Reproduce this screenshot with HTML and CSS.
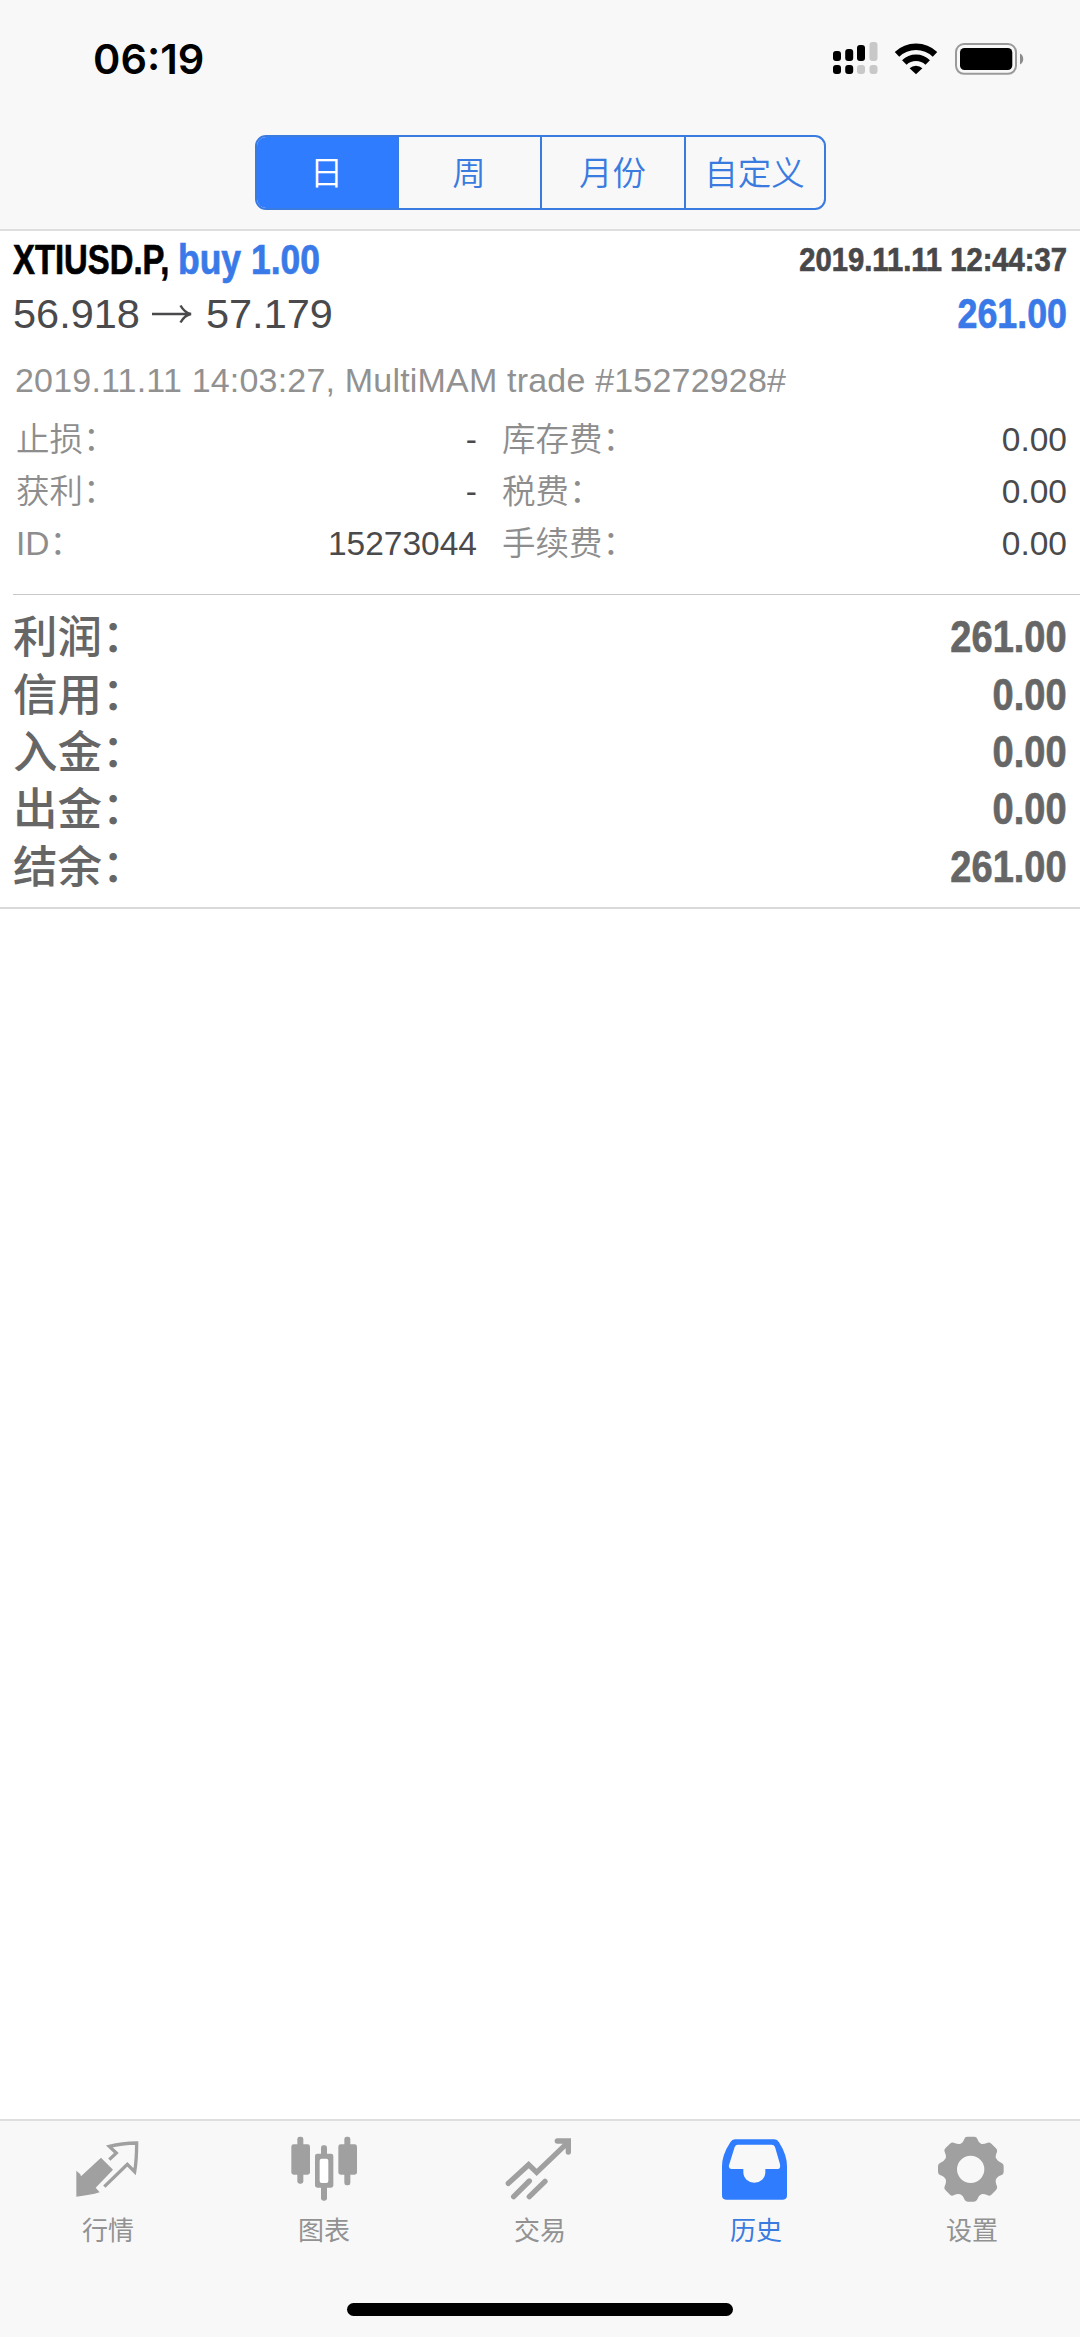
FILE: index.html
```html
<!DOCTYPE html>
<html lang="zh-CN">
<head>
<meta charset="utf-8">
<title>历史</title>
<link rel="stylesheet" href="styles.css">
</head>
<body>
<div class="app">
  <header class="top">
    <div class="status">
      <span class="clock">06:19</span>
      <svg class="status-icons" width="192" height="36" viewBox="832 40 192 36">
        <g fill="#000">
          <rect x="833" y="51" width="8" height="10" rx="3"/><rect x="845.2" y="49" width="8" height="12" rx="3"/><rect x="857" y="45" width="8" height="16" rx="3"/>
          <rect x="833" y="65" width="8" height="9" rx="3"/><rect x="845.2" y="65" width="8" height="9" rx="3"/>
        </g>
        <g fill="#c8c8c8">
          <rect x="869.5" y="42" width="8" height="19" rx="3"/><rect x="857" y="65" width="8" height="9" rx="3"/><rect x="869.5" y="65" width="8" height="9" rx="3"/>
        </g>
        <g fill="none" stroke="#000" stroke-width="6.500">
          <path d="M897 54.3a27.5 27.5 0 0 1 38 0"/><path d="M904.3 62.500a17 17 0 0 1 23.400 0"/>
        </g>
        <path d="M909.600 68.300a9 9 0 0 1 12.800 0L916 74.300z" fill="#000"/>
        <rect x="956" y="44" width="60" height="29.800" rx="8" fill="none" stroke="#9a9a9a" stroke-width="2"/>
        <rect x="960" y="48" width="52.300" height="22" rx="4.500"/>
        <path d="M1020 53.500c4.300 2 4.300 9 0 11z" fill="#8c8c8c"/>
      </svg>
    </div>
    <nav class="segments">
      <span class="segment active">日</span><span class="segment">周</span><span class="segment">月份</span><span class="segment">自定义</span>
    </nav>
  </header>

  <main>
    <section class="deal">
      <div class="row title"><span class="symbol"><b class="condensed">XTIUSD.P,</b></span><span class="side"><b class="condensed">buy 1.00</b></span><b class="condensed time">2019.11.11 12:44:37</b></div>
      <div class="row prices">
        <span>56.918</span>
        <svg class="arrow" width="42" height="24" viewBox="0 0 42 24" fill="none" stroke="#4a4a4c" stroke-width="2.500"><path d="M1 12H39M29.500 3.500C32 8 35 11 40 12C35 13 32 16 29.500 20.500"/></svg>
        <span>57.179</span>
        <b class="condensed profit">261.00</b>
      </div>
      <div class="comment">2019.11.11 14:03:27, MultiMAM trade #15272928#</div>
      <div class="details">
        <span class="label">止损<i>：</i></span><span class="value dash">-</span><span class="label second">库存费<i>：</i></span><span class="value">0.00</span>
        <span class="label">获利<i>：</i></span><span class="value dash">-</span><span class="label second">税费<i>：</i></span><span class="value">0.00</span>
        <span class="label">ID<i>：</i></span><span class="value">15273044</span><span class="label second">手续费<i>：</i></span><span class="value">0.00</span>
      </div>
    </section>
    <section class="summary">
      <div class="total"><span>利润<i>：</i></span><b class="condensed">261.00</b></div>
      <div class="total"><span>信用<i>：</i></span><b class="condensed">0.00</b></div>
      <div class="total"><span>入金<i>：</i></span><b class="condensed">0.00</b></div>
      <div class="total"><span>出金<i>：</i></span><b class="condensed">0.00</b></div>
      <div class="total"><span>结余<i>：</i></span><b class="condensed">261.00</b></div>
    </section>
  </main>

  <footer class="bottom">
    <nav class="tabs">
      <div class="tab">
        <svg width="80" height="70" viewBox="204 100 240 210"><path fill="#a0a0a0" d="M229 213L241 224L243 230L303 174L339 210L287 264L299 278Q270 287 229 291z"/><path fill="none" stroke="#a0a0a0" stroke-width="10" d="M328 180L349 160L328 140Q365 131 410 130Q410 180 404 216L382 194L313 261"/></svg>
        <span>行情</span>
      </div>
      <div class="tab">
        <svg width="80" height="70" viewBox="852 100 240 210" fill="#a0a0a0"><rect x="892" y="111" width="18" height="141" rx="7"/><rect x="874" y="134" width="56" height="91" rx="7"/><rect x="1033" y="111" width="18" height="146" rx="7"/><rect x="1015" y="134" width="56" height="91" rx="7"/><rect x="963" y="137" width="18" height="166" rx="7"/><rect x="945" y="162" width="55" height="102" rx="7"/><rect x="959" y="177" width="26" height="73" rx="6" fill="#fff"/></svg>
        <span>图表</span>
      </div>
      <div class="tab">
        <svg width="80" height="70" viewBox="300 100 240 210" fill="none" stroke="#a0a0a0" stroke-width="16" stroke-linecap="round" stroke-linejoin="miter"><path d="M325 251L386 195L410 218L504 128M472 124H505V157M341 291L388 244M388 291L435 245"/></svg>
        <span>交易</span>
      </div>
      <div class="tab active">
        <svg width="80" height="70" viewBox="948 100 240 210"><path fill="#2f7cff" d="M1005 119H1123Q1132 119 1137 128Q1161 166 1161 200V287Q1161 300 1149 300H978Q966 300 966 287V200Q966 166 991 128Q996 119 1005 119z"/><path fill="#f8f8f8" d="M1013 135H1115Q1122 135 1125 142L1140 194Q1142 208 1134 208H1096V218A33 31 0 0 1 1030 218V208H994Q985 208 987 197L1004 142Q1007 135 1013 135z"/></svg>
        <span>历史</span>
      </div>
      <div class="tab">
        <svg width="80" height="70" viewBox="696 100 240 210"><path fill="#a0a0a0" fill-rule="evenodd" d="M793 118Q795 111 802 111H823Q830 111 832 118Q836 130 844 133Q852 134 863 129Q869 127 874 132L888 146Q893 151 891 157Q885 170 888 176Q892 185 905 190Q911 193 911 200V216Q911 223 905 226Q892 230 888 239Q885 247 891 260Q893 266 888 271L874 285Q869 290 863 287Q850 281 844 284Q836 287 832 299Q829 306 822 306H803Q796 306 793 299Q789 287 780 284Q773 281 761 287Q755 290 750 285L736 271Q731 266 734 260Q740 247 737 239Q733 230 720 226Q714 223 714 216V200Q714 193 720 190Q733 185 737 176Q740 170 734 157Q731 151 736 146L750 132Q755 127 761 129Q773 134 780 133Q789 130 793 118zM812 168A41 41 0 1 0 812 250A41 41 0 1 0 812 168z"/></svg>
        <span>设置</span>
      </div>
    </nav>
    <div class="home-bar"></div>
  </footer>
</div>
</body>
</html>
```
FILE: styles.css
```css
* { box-sizing: border-box; }
body { margin: 0; background: #fff; font-family: "Liberation Sans", "Noto Sans CJK SC", sans-serif; }
i { font-style: normal; }
.app { width: 1080px; height: 2337px; display: flex; flex-direction: column; overflow: hidden; }

.top { height: 231px; background: #f8f8f8; border-bottom: 2px solid #dedede; }
.status { height: 135px; padding: 40px 56px 0 93px; display: flex; justify-content: space-between; align-items: flex-start; }
.clock { font: 600 41.500px/38px Inter, sans-serif; }
.segments { width: 571px; height: 75px; margin: 0 auto; display: grid; grid-template-columns: 140px 143px 144px 1fr; border: 2px solid #3a7be0; border-radius: 11px; overflow: hidden; }
.segment { display: flex; align-items: center; justify-content: center; padding-bottom: 4px; color: #3a7be0; font: 350 33.500px/48px "Noto Sans CJK SC", sans-serif; border-left: 2px solid #3a7be0; }
.segment.active { background: #2f7cff; color: #fff; border-left: 0; }

/* Narrow figures: the bold face is squeezed horizontally */
.condensed { display: inline-block; font-weight: 700; white-space: nowrap; -webkit-text-stroke: .7px currentColor; transform: scaleX(.826); transform-origin: right center; }
.deal { height: 363px; padding: 0 13px; }
.row { display: flex; align-items: center; }
.title { height: 57px; font-size: 42px; }
.symbol { width: 165px; color: #000; }
.symbol .condensed { transform: scaleX(.782); transform-origin: left center; }
.side { width: 150px; color: #397ae8; }
.side .condensed { transform: scaleX(.845); transform-origin: left center; }
.time { margin-left: auto; font-size: 34px; color: #48484a; transform: scaleX(.858); }
.prices { height: 52px; font-size: 41.500px; color: #4a4a4c; }
.arrow { margin: 0 13px 0 11px; }
.profit { margin-left: auto; font-size: 42.500px; color: #397ae8; transform: scaleX(.842); }
.comment { height: 74px; padding: 20px 0 0 2px; font-size: 34px; line-height: 40px; letter-spacing: .19px; color: #919191; white-space: nowrap; }
.details { display: grid; grid-template-columns: 98px 363px 185px 1fr; grid-auto-rows: 52.200px; font-size: 33.500px; line-height: 52px; padding-left: 3px; }
.label { color: #8d8d8d; font-weight: 350; white-space: nowrap; }
.label.second { padding-left: 25px; }
.label i, .total i { vertical-align: .02em; line-height: 1; }
.value { color: #4a4a4c; text-align: right; }

.summary { position: relative; height: 315px; padding: 13px 13px 0; border-bottom: 2px solid #d9d9d9; }
.summary::before { content: ""; position: absolute; left: 13px; right: 0; top: 0; height: 1px; background: #c8c8c8; }
.total { height: 57.400px; display: flex; justify-content: space-between; align-items: center; font-size: 44.500px; line-height: 57px; color: #666; }
.total span { height: 57px; line-height: 54px; font-weight: 500; font-family: "Noto Sans CJK SC", sans-serif; }
.total b { padding-top: 2px; font-size: 45px; transform: scaleX(.845); }

.bottom { height: 218px; margin-top: auto; background: #f8f8f8; border-top: 2px solid #dedede; }
.tabs { display: grid; grid-template-columns: repeat(5, 1fr); padding-top: 12px; height: 182px; }
.tab { display: flex; flex-direction: column; align-items: center; color: #929292; font: 400 26px/40px "Noto Sans CJK SC", sans-serif; }
.tab svg { display: block; margin-bottom: 6px; }
.tab.active { color: #3a7be0; }
.home-bar { width: 386px; height: 13px; margin: 0 auto; border-radius: 7px; background: #000; }
```
